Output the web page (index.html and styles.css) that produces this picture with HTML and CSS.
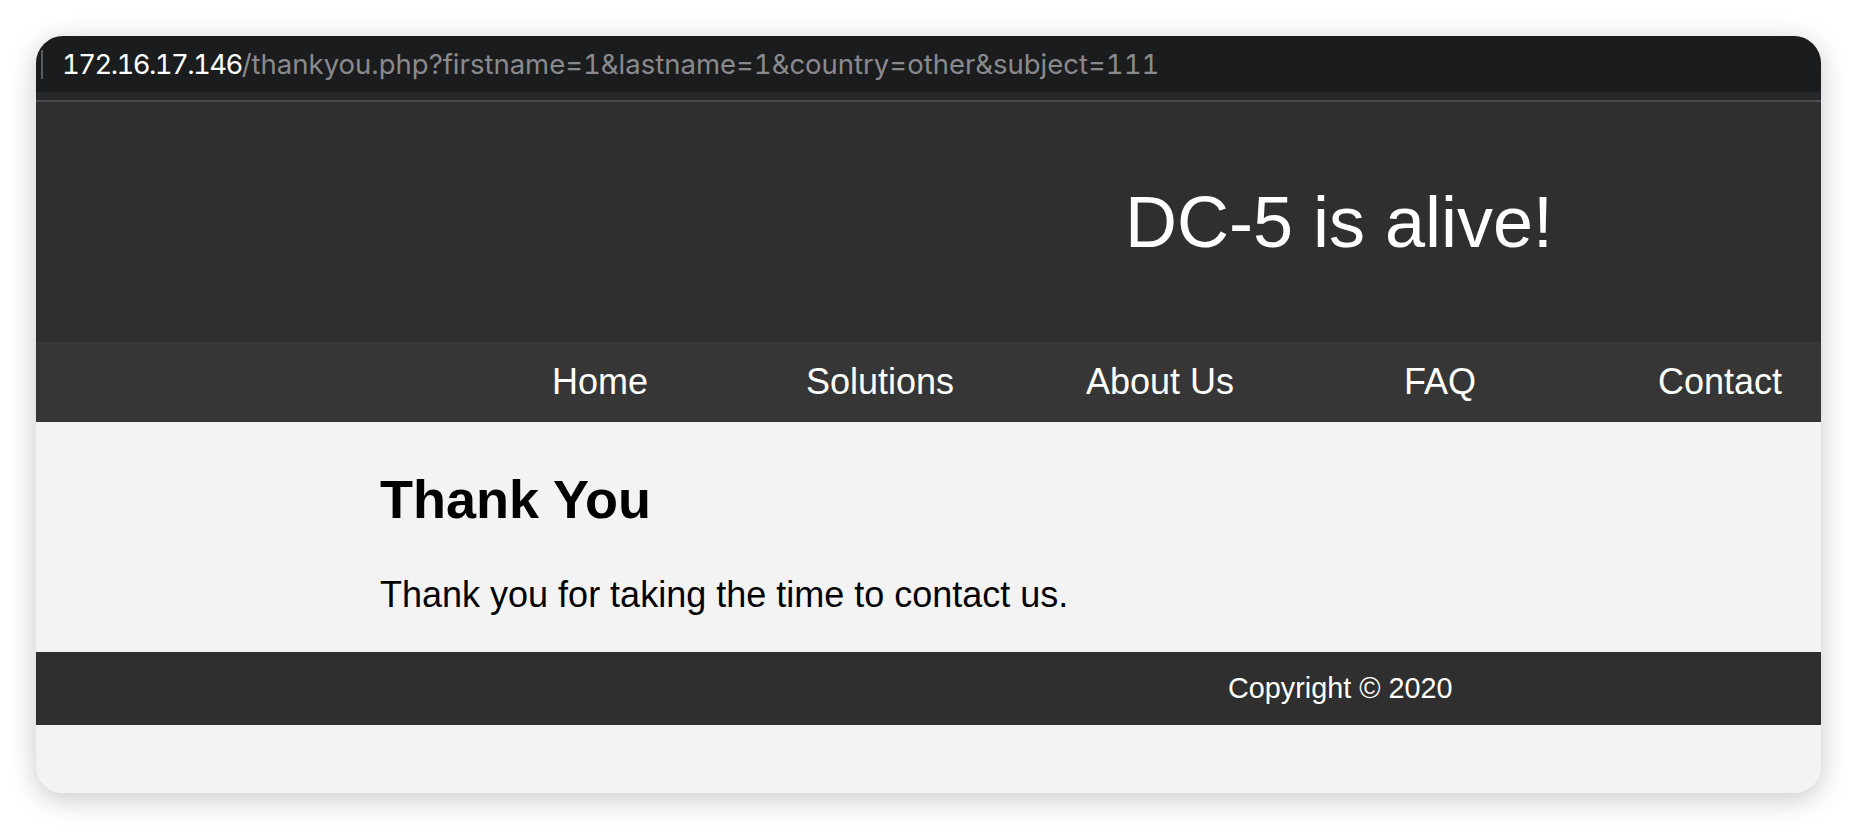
FILE: index.html
```html
<!DOCTYPE html>
<html>
<head>
<meta charset="utf-8">
<title>DC-5 is alive!</title>
<link rel="stylesheet" href="styles.css">
</head>
<body>
<div class="window">
  <div class="urlbar">
    <span class="caret"></span>
    <span class="url"><span class="host">172.16.17.146</span><span class="path">/thankyou.php?firstname=1&amp;lastname=1&amp;country=other&amp;subject=111</span></span>
  </div>
  <div class="toolstrip"></div>
  <div class="page">
    <header class="site-header">
      <h1 class="site-title">DC-5 is alive!</h1>
    </header>
    <nav class="site-nav">
      <a class="nav-item" href="#">Home</a>
      <a class="nav-item" href="#">Solutions</a>
      <a class="nav-item" href="#">About Us</a>
      <a class="nav-item" href="#">FAQ</a>
      <a class="nav-item" href="#">Contact</a>
    </nav>
    <main class="content">
      <h2 class="content-title">Thank You</h2>
      <p class="content-text">Thank you for taking the time to contact us.</p>
    </main>
    <footer class="site-footer">Copyright © 2020</footer>
  </div>
</div>
</body>
</html>
```
FILE: styles.css
```css
html, body {
  margin: 0;
  padding: 0;
  background: #ffffff;
}
body {
  padding: 36px 0 0 36px;
  height: 830px;
  box-sizing: border-box;
  overflow: hidden;
}
.window {
  width: 1785px;
  height: 757px;
  border-radius: 27px;
  overflow: hidden;
  background: #f3f3f3;
  box-shadow: 0 6px 28px rgba(0, 0, 0, 0.22);
  display: flex;
  flex-direction: column;
}
.urlbar {
  height: 56px;
  background: #1b1c1e;
  display: flex;
  align-items: center;
  padding-left: 5px;
  flex-shrink: 0;
}
.caret {
  width: 2px;
  height: 29px;
  background: #5b5b5f;
  margin-right: 19px;
  margin-top: 1px;
}
.url {
  font-family: "Inter", "Noto Sans", sans-serif;
  font-size: 27.5px;
  font-variant-numeric: tabular-nums;
  white-space: nowrap;
  margin-top: -1px;
}
.host {
  color: #ffffff;
  letter-spacing: -1.6px;
}
.path { color: #8a8a8e; }
.toolstrip {
  height: 8px;
  background: #27282c;
  border-bottom: 2px solid #4b4b50;
  flex-shrink: 0;
}
.page {
  font-family: "Liberation Sans", Arial, sans-serif;
  flex: 1;
  background: #f3f3f3;
}
.site-header {
  height: 240px;
  background: #2f2f2f;
  box-sizing: border-box;
  padding: 80px 0 0 1089px;
}
.site-title {
  margin: 0;
  font-weight: normal;
  font-size: 72px;
  line-height: 80px;
  color: #ffffff;
  white-space: nowrap;
}
.site-nav {
  height: 80px;
  background: #363636;
  display: flex;
  padding-left: 424px;
}
.nav-item {
  flex: 0 0 280px;
  text-align: center;
  color: #ffffff;
  text-decoration: none;
  font-size: 36px;
  line-height: 80px;
  white-space: nowrap;
}
.content {
  height: 230px;
  box-sizing: border-box;
  padding: 47px 0 0 344px;
  background: #f3f3f3;
}
.content-title {
  margin: 0;
  font-size: 54px;
  line-height: 60px;
  font-weight: bold;
  color: #000000;
}
.content-text {
  margin: 46px 0 0;
  font-size: 36px;
  line-height: 40px;
  color: #000000;
}
.site-footer {
  height: 73px;
  background: #2f2f2f;
  color: #ffffff;
  font-size: 28.8px;
  line-height: 73px;
  padding-left: 1192px;
  white-space: nowrap;
}
```
